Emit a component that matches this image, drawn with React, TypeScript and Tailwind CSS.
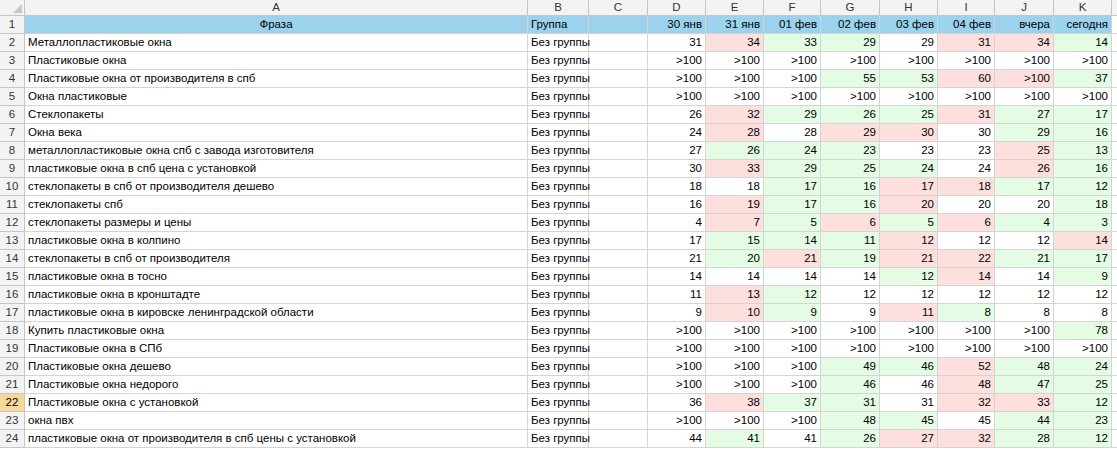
const rows: [string, string][] = [
  ["Металлопластиковые окна", "31w 34p 33g 29g 29w 31p 34p 14g"],
  ["Пластиковые окна", ">100w >100w >100w >100w >100w >100w >100w >100w"],
  ["Пластиковые окна от производителя в спб", ">100w >100w >100w 55g 53g 60p >100p 37g"],
  ["Окна пластиковые", ">100w >100w >100w >100w >100w >100w >100w >100w"],
  ["Стеклопакеты", "26w 32p 29g 26g 25g 31p 27g 17g"],
  ["Окна века", "24w 28p 28w 29p 30p 30w 29g 16g"],
  ["металлопластиковые окна спб с завода изготовителя", "27w 26g 24g 23g 23w 23w 25p 13g"],
  ["пластиковые окна в спб цена с установкой", "30w 33p 29g 25g 24g 24w 26p 16g"],
  ["стеклопакеты в спб от производителя дешево", "18w 18w 17g 16g 17p 18p 17g 12g"],
  ["стеклопакеты спб", "16w 19p 17g 16g 20p 20w 20w 18g"],
  ["стеклопакеты размеры и цены", "4w 7p 5g 6p 5g 6p 4g 3g"],
  ["пластиковые окна в колпино", "17w 15g 14g 11g 12p 12w 12w 14p"],
  ["стеклопакеты в спб от производителя", "21w 20g 21p 19g 21p 22p 21g 17g"],
  ["пластиковые окна в тосно", "14w 14w 14w 14w 12g 14p 14w 9g"],
  ["пластиковые окна в кронштадте", "11w 13p 12g 12w 12w 12w 12w 12w"],
  ["пластиковые окна в кировске ленинградской области", "9w 10p 9g 9w 11p 8g 8w 8w"],
  ["Купить пластиковые окна", ">100w >100w >100w >100w >100w >100w >100w 78g"],
  ["Пластиковые окна в СПб", ">100w >100w >100w >100w >100w >100w >100w >100w"],
  ["Пластиковые окна дешево", ">100w >100w >100w 49g 46g 52p 48g 24g"],
  ["Пластиковые окна недорого", ">100w >100w >100w 46g 46w 48p 47g 25g"],
  ["Пластиковые окна с установкой", "36w 38p 37g 31g 31w 32p 33p 12g"],
  ["окна пвх", ">100w >100w >100w 48g 45g 45w 44g 23g"],
  ["пластиковые окна от производителя в спб цены с установкой", "44w 41g 41w 26g 27p 32p 28g 12g"],
];

const dates = ["30 янв", "31 янв", "01 фев", "02 фев", "03 фев", "04 фев", "вчера", "сегодня"];
const letters = ["A", "B", "C", "D", "E", "F", "G", "H", "I", "J", "K"];
const grid = "grid grid-cols-[25px_503px_61px_59px_58px_58px_57px_59px_58px_57px_59px_58px_5px]";
const bg: Record<string, string> = { w: "bg-white", p: "bg-[#fde0de]", g: "bg-[#e4fbe4]" };

export default function App() {
  return (
    <div className="w-[1117px] h-[450px] overflow-hidden bg-white text-[11.5px] text-black" style={{ fontFamily: '"Liberation Sans", Arial, sans-serif' }}>
      <div className={`${grid} h-[16px] bg-[#f3f3f3] text-[#333]`}>
        <div className="border-r border-b border-[#c6c6c6] flex items-end justify-end p-[2px]">
          <div className="w-0 h-0 border-l-[9px] border-l-transparent border-b-[9px] border-b-[#c8c8c8]" />
        </div>
        {letters.map((l) => (
          <div key={l} className="border-r border-b border-[#c6c6c6] flex items-center justify-center leading-none">{l}</div>
        ))}
        <div className="border-b border-[#c6c6c6]" />
      </div>
      <div className={`${grid} h-[18px]`}>
        <div className="bg-[#f3f3f3] text-[#333] border-r border-b border-[#c6c6c6] flex items-center justify-center">1</div>
        <div className="bg-[#9bd3ee] border-r border-b border-[#d4d4d4] flex items-center justify-center">Фраза</div>
        <div className="bg-[#9bd3ee] border-r border-b border-[#d4d4d4] flex items-center px-[3px]">Группа</div>
        <div className="bg-[#9bd3ee] border-r border-b border-[#d4d4d4]" />
        {dates.map((d) => (
          <div key={d} className="bg-[#9bd3ee] border-r border-b border-[#d4d4d4] flex items-center justify-end px-[3px]">{d}</div>
        ))}
        <div className="border-b border-[#d4d4d4]" />
      </div>
      {rows.map(([phrase, data], i) => {
        const n = i + 2;
        const sel = n === 22;
        return (
          <div key={n} className={`${grid} h-[18px]`}>
            <div className={`${sel ? "bg-[#f9d99a] text-black" : "bg-[#f3f3f3] text-[#333]"} border-r border-b border-[#c6c6c6] flex items-center justify-center`}>{n}</div>
            <div className="border-r border-b border-[#d4d4d4] flex items-center px-[3px] whitespace-nowrap">{phrase}</div>
            <div className="border-r border-b border-[#d4d4d4] flex items-center px-[3px] whitespace-nowrap">Без группы</div>
            <div className="border-r border-b border-[#d4d4d4]" />
            {data.split(" ").map((c, j) => (
              <div key={j} className={`${bg[c.slice(-1)]} border-r border-b border-[#d4d4d4] flex items-center justify-end px-[3px]`}>{c.slice(0, -1)}</div>
            ))}
            <div className="border-b border-[#d4d4d4]" />
          </div>
        );
      })}
    </div>
  );
}
